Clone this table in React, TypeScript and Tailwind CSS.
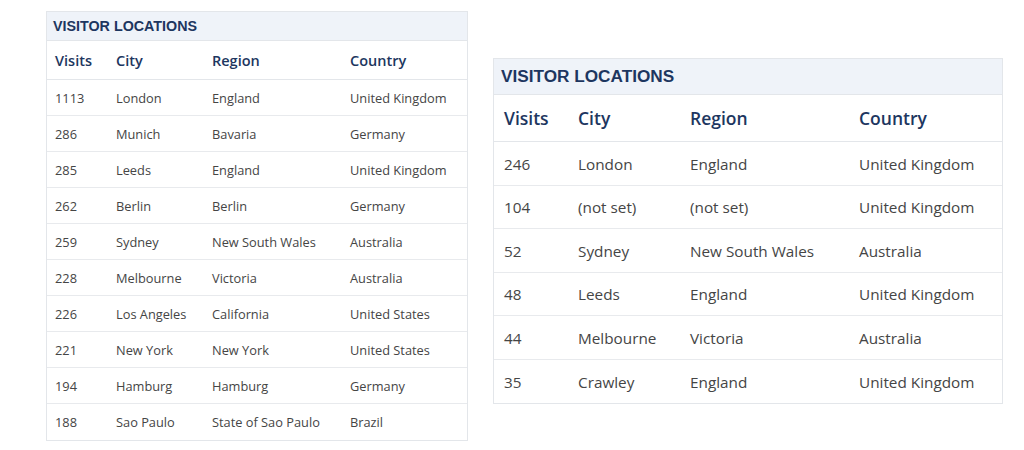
import React from "react";

type Row = [string, string, string, string];

const left: Row[] = [
  ["1113", "London", "England", "United Kingdom"],
  ["286", "Munich", "Bavaria", "Germany"],
  ["285", "Leeds", "England", "United Kingdom"],
  ["262", "Berlin", "Berlin", "Germany"],
  ["259", "Sydney", "New South Wales", "Australia"],
  ["228", "Melbourne", "Victoria", "Australia"],
  ["226", "Los Angeles", "California", "United States"],
  ["221", "New York", "New York", "United States"],
  ["194", "Hamburg", "Hamburg", "Germany"],
  ["188", "Sao Paulo", "State of Sao Paulo", "Brazil"],
];

const right: Row[] = [
  ["246", "London", "England", "United Kingdom"],
  ["104", "(not set)", "(not set)", "United Kingdom"],
  ["52", "Sydney", "New South Wales", "Australia"],
  ["48", "Leeds", "England", "United Kingdom"],
  ["44", "Melbourne", "Victoria", "Australia"],
  ["35", "Crawley", "England", "United Kingdom"],
];

const heads: Row = ["Visits", "City", "Region", "Country"];

export default function App() {
  return (
    <div className="w-[1024px] h-[450px] bg-white flex items-start pl-[46px] pt-[11px] gap-[25px] overflow-hidden">
      {/* Left table */}
      <div className="w-[422px] border border-[#e3e6ea] bg-white">
        <div className="h-[29px] bg-[#eff3f9] border-b border-[#e3e6ea] flex items-center pl-[6px] pt-[1px]">
          <span className="font-['Liberation_Sans',Arial,sans-serif] font-bold text-[14.3px] text-[#1d3660]">
            VISITOR LOCATIONS
          </span>
        </div>
        <div className="grid grid-cols-[61px_96px_138px_1fr] font-['Open_Sans',sans-serif]">
          {heads.map((h) => (
            <div
              key={h}
              className="h-[39px] flex items-center pl-[8px] pt-[1px] border-b border-[#e3e6ea] text-[14.5px] font-semibold text-[#1d3660]"
            >
              {h}
            </div>
          ))}
          {left.map((r, i) =>
            r.map((c, j) => (
              <div
                key={i + "-" + j}
                className={
                  "h-[36px] flex items-center pl-[8px] pt-[2px] text-[12.8px] text-[#454545] " +
                  (i < left.length - 1 ? "border-b border-[#e8eaed]" : "")
                }
              >
                {c}
              </div>
            ))
          )}
        </div>
      </div>

      {/* Right table */}
      <div className="mt-[47px] w-[510px] border border-[#e3e6ea] bg-white">
        <div className="h-[36px] bg-[#eff3f9] border-b border-[#e3e6ea] flex items-center pl-[7px] pt-[1px]">
          <span className="font-['Liberation_Sans',Arial,sans-serif] font-bold text-[17.2px] text-[#1d3660]">
            VISITOR LOCATIONS
          </span>
        </div>
        <div className="grid grid-cols-[74px_112px_169px_1fr] font-['Open_Sans',sans-serif]">
          {heads.map((h) => (
            <div
              key={h}
              className="h-[47px] flex items-center pl-[10px] pt-[1px] border-b border-[#e3e6ea] text-[17.5px] font-semibold text-[#1d3660]"
            >
              {h}
            </div>
          ))}
          {right.map((r, i) =>
            r.map((c, j) => (
              <div
                key={i + "-" + j}
                className={
                  "h-[43.5px] flex items-center pl-[10px] pt-[2px] text-[15.3px] text-[#454545] " +
                  (i < right.length - 1 ? "border-b border-[#e8eaed]" : "")
                }
              >
                {c}
              </div>
            ))
          )}
        </div>
      </div>
    </div>
  );
}
